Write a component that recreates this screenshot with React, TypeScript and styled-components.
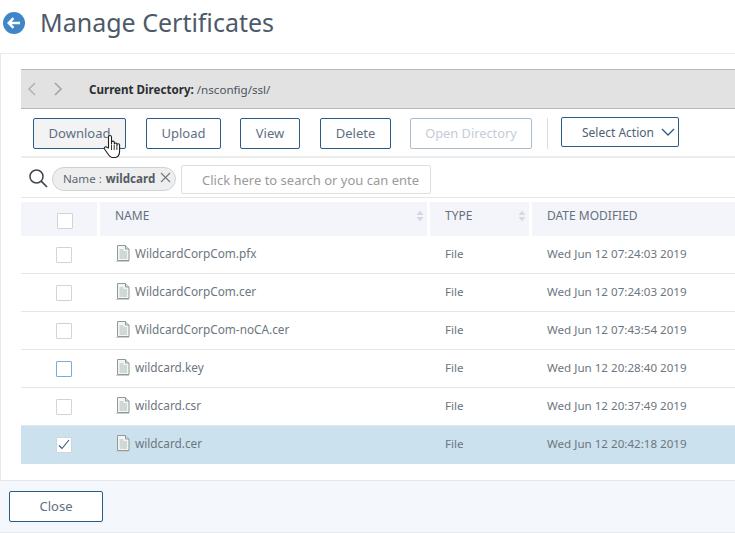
import React from "react";
import styled, { createGlobalStyle } from "styled-components";

const Global = createGlobalStyle`
  html, body { margin: 0; padding: 0; background: #fff; }
  body { font-family: "Noto Sans", "Open Sans", sans-serif; color: #5f6b7a; overflow: hidden; }
  * { box-sizing: border-box; }
`;

const Page = styled.div`
  width: 735px;
  height: 533px;
  display: flex;
  flex-direction: column;
  overflow: hidden;
`;
const TitleBar = styled.header`
  height: 53px;
  display: flex;
  align-items: flex-start;
  padding: 12px 0 0 3px;
  gap: 15px;
`;
const BackIcon = styled.svg`
  width: 22px;
  height: 22px;
  flex: none;
`;
const Title = styled.h1`
  margin: -7px 0 0;
  font-size: 25px;
  line-height: 34px;
  font-weight: 400;
  color: #4d5a69;
`;
const Panel = styled.section`
  height: 427px;
  border-top: 1px solid #e6e9ed;
  border-left: 1px solid #e6e9ed;
  padding: 15px 0 0 20px;
`;
const DirBar = styled.div`
  height: 40px;
  background: #e2e2e2;
  border-top: 1px solid #b9b9b9;
  border-bottom: 1px solid #b9b9b9;
  display: flex;
  align-items: center;
  padding-left: 5px;
`;
const Nav = styled.svg`
  width: 11px;
  height: 16px;
  margin-right: 16px;
  flex: none;
`;
const DirText = styled.div`
  margin-left: 9px;
  font-size: 11.6px;
  color: #4b5560;
  b { font-weight: 700; color: #2b2f33; }
`;
const Toolbar = styled.div`
  height: 49px;
  border-bottom: 2px solid #ececec;
  display: flex;
  align-items: flex-start;
  padding: 9px 0 0 12px;
`;
const Btn = styled.button<{ $w: number; $mr: number; $hover?: boolean; $disabled?: boolean }>`
  width: ${(p) => p.$w}px;
  margin-right: ${(p) => p.$mr}px;
  height: 31px;
  flex: none;
  padding: 0 0 2px;
  font: 400 ${(p) => (p.$disabled ? 12.8 : 13)}px "Noto Sans", sans-serif;
  background: ${(p) => (p.$hover ? "#f3f3f3" : "#fff")};
  color: ${(p) => (p.$disabled ? "#c3ccd7" : "#5f6f82")};
  border: 1px solid ${(p) => (p.$disabled ? "#abbccd" : "#2a5a8a")};
  border-radius: 2px;
`;
const Divider = styled.div`
  width: 1px;
  height: 31px;
  background: #dcdcdc;
  margin-right: 13px;
  flex: none;
`;
const Select = styled.div`
  width: 118px;
  height: 30px;
  margin-top: -1px;
  border: 1px solid #2a5a8a;
  border-radius: 2px;
  display: flex;
  align-items: center;
  padding-left: 20px;
  gap: 7px;
  font-size: 12px;
  color: #4f6075;
`;
const SearchRow = styled.div`
  height: 40px;
  border-bottom: 1px solid #e6e6e6;
  display: flex;
  align-items: center;
  padding: 3px 0 0 7px;
`;
const SearchIcon = styled.svg`
  width: 20px;
  height: 20px;
  margin: -3px 4px 0 0;
  flex: none;
`;
const Chip = styled.div`
  width: 124px;
  height: 24px;
  border: 1px solid #cfd2d5;
  background: #eeeeee;
  border-radius: 12px;
  display: flex;
  align-items: center;
  padding-left: 10px;
  font-size: 11.6px;
  color: #5d6873;
  margin: -1px 5px 0 0;
  flex: none;
  b { font-weight: 700; margin-left: 4px; color: #545c66; }
  i { font-style: normal; margin-left: 5px; display: flex; margin-top: -2px; }
`;
const SearchInput = styled.div`
  width: 250px;
  height: 29px;
  border: 1px solid #dedede;
  border-radius: 2px;
  padding-left: 20px;
  font-size: 13px;
  line-height: 28px;
  color: #9a9a9a;
  overflow: hidden;
  white-space: nowrap;
`;
const Table = styled.div`
  margin-top: 4px;
  display: flex;
  flex-direction: column;
`;
const Cols = "76px 327px 99px 1fr";
const Head = styled.div`
  display: grid;
  grid-template-columns: ${Cols};
  column-gap: 3px;
  height: 34px;
`;
const HeadCell = styled.div`
  background: #f3f5fa;
  display: flex;
  align-items: center;
  padding: 0 2px 7px 15px;
  font-size: 12px;
  color: #65707e;
`;
const CheckHead = styled.div`
  background: #f3f5fa;
  display: flex;
  align-items: center;
  padding-top: 4px;
`;
const SortHead = styled(HeadCell)`
  justify-content: space-between;
`;
const Sort = styled.svg`
  width: 8px;
  height: 12px;
  margin-right: 1px;
`;
const Row = styled.div<{ $selected?: boolean }>`
  display: grid;
  grid-template-columns: ${Cols};
  column-gap: 3px;
  height: 38px;
  align-items: center;
  font-size: 11.6px;
  color: #6c7680;
  background: ${(p) => (p.$selected ? "#cce1ee" : "#fff")};
  border-bottom: 1px solid ${(p) => (p.$selected ? "#cfe0ee" : "#e4e6e8")};
`;
const Check = styled.div<{ $focus?: boolean }>`
  width: 16px;
  height: 16px;
  margin-left: 35px;
  background: #fff;
  border: 1px solid ${(p) => (p.$focus ? "#7fabd5" : "#d4d4d4")};
  border-radius: 1px;
  display: flex;
  align-items: center;
  justify-content: center;
`;
const HeadCheck = styled(Check)`
  margin-left: 36px;
`;
const NameCell = styled.div`
  display: flex;
  align-items: center;
  gap: 4px;
  padding: 0 0 3px 15px;
  font-size: 11.8px;
`;
const FileSvg = styled.svg`
  width: 16px;
  height: 18px;
  flex: none;
`;
const TextCell = styled.div`
  padding: 0 0 2px 15px;
`;
const Footer = styled.footer`
  height: 53px;
  border-top: 1px solid #e2e6ea;
  border-bottom: 1px solid #e6e9ed;
  background: #f4f7fb;
  padding: 10px 0 0 9px;
`;
const CloseBtn = styled(Btn)`
  background: #fff;
`;
const Hand = styled.svg`
  position: absolute;
  left: 103px;
  top: 134px;
  width: 20px;
  height: 25px;
`;
const Root = styled.div`
  position: relative;
`;

const FileIcon = () => (
  <FileSvg viewBox="0 0 16 18">
    <path d="M2.5 1.5h8l3.5 3.5v11.5h-11.5z" fill="#f4f6f5" stroke="#8f9a98" />
    <path d="M10.5 1.5v3.5h3.5" fill="#dfe5e4" stroke="#8f9a98" />
    <path d="M4.5 6h4M4.5 8h7.5M4.5 10h7.5M4.5 12h7.5M4.5 14h7.5" stroke="#a9bdb9" />
    <path d="M1 17.5h13" stroke="#c9cfce" />
  </FileSvg>
);

const SortIcon = () => (
  <Sort viewBox="0 0 8 12">
    <path d="M4 0.5L7.5 5H0.5z M4 11.5L0.5 7H7.5z" fill="#d6dae0" />
  </Sort>
);

const rows = [
  ["WildcardCorpCom.pfx", "Wed Jun 12 07:24:03 2019"],
  ["WildcardCorpCom.cer", "Wed Jun 12 07:24:03 2019"],
  ["WildcardCorpCom-noCA.cer", "Wed Jun 12 07:43:54 2019"],
  ["wildcard.key", "Wed Jun 12 20:28:40 2019"],
  ["wildcard.csr", "Wed Jun 12 20:37:49 2019"],
  ["wildcard.cer", "Wed Jun 12 20:42:18 2019"],
];

export default function App() {
  return (
    <Root>
      <Global />
      <Page>
        <TitleBar>
          <BackIcon viewBox="0 0 22 22">
            <circle cx="11" cy="11" r="11" fill="#3f86c9" />
            <path d="M17 11H6M10.5 6.2L5.7 11l4.8 4.8" fill="none" stroke="#fff" strokeWidth="2.4" />
          </BackIcon>
          <Title>Manage Certificates</Title>
        </TitleBar>
        <Panel>
          <DirBar>
            <Nav viewBox="0 0 11 16">
              <path d="M9 2L3 8l6 6" fill="none" stroke="#b3b3b3" strokeWidth="1.6" />
            </Nav>
            <Nav viewBox="0 0 11 16">
              <path d="M2 2l6 6-6 6" fill="none" stroke="#a5a5a5" strokeWidth="1.6" />
            </Nav>
            <DirText>
              <b>Current Directory:</b> /nsconfig/ssl/
            </DirText>
          </DirBar>
          <Toolbar>
            <Btn $w={93} $mr={20} $hover>Download</Btn>
            <Btn $w={75} $mr={19}>Upload</Btn>
            <Btn $w={60} $mr={20}>View</Btn>
            <Btn $w={71} $mr={19}>Delete</Btn>
            <Btn $w={122} $mr={15} $disabled>Open Directory</Btn>
            <Divider />
            <Select>
              Select Action
              <svg width="14" height="8" viewBox="0 0 14 8">
                <path d="M1 1l6 6 6-6" fill="none" stroke="#2a5a8a" strokeWidth="1.3" />
              </svg>
            </Select>
          </Toolbar>
          <SearchRow>
            <SearchIcon viewBox="0 0 20 20">
              <circle cx="8.5" cy="8.5" r="6.5" fill="none" stroke="#3d4650" strokeWidth="1.5" />
              <path d="M13.2 13.2L19 19" stroke="#3d4650" strokeWidth="1.7" />
            </SearchIcon>
            <Chip>
              Name :<b>wildcard</b>
              <i>
                <svg width="11" height="11" viewBox="0 0 11 11">
                  <path d="M1 1l9 9M10 1l-9 9" stroke="#6f7780" strokeWidth="1.1" />
                </svg>
              </i>
            </Chip>
            <SearchInput>Click here to search or you can ente</SearchInput>
          </SearchRow>
          <Table>
            <Head>
              <CheckHead><HeadCheck /></CheckHead>
              <SortHead>NAME<SortIcon /></SortHead>
              <SortHead>TYPE<SortIcon /></SortHead>
              <HeadCell>DATE MODIFIED</HeadCell>
            </Head>
            {rows.map(([name, date], i) => (
              <Row key={name} $selected={i === 5}>
                <Check $focus={i === 3}>
                  {i === 5 && (
                    <svg width="12" height="11" viewBox="0 0 12 11">
                      <path d="M1 6.5l3 3L11 1" fill="none" stroke="#2a5a8a" strokeWidth="1.1" />
                    </svg>
                  )}
                </Check>
                <NameCell><FileIcon />{name}</NameCell>
                <TextCell>File</TextCell>
                <TextCell>{date}</TextCell>
              </Row>
            ))}
          </Table>
        </Panel>
        <Footer>
          <CloseBtn $w={94} $mr={0}>Close</CloseBtn>
        </Footer>
      </Page>
      <Hand viewBox="0 0 20 25">
        <path
          d="M5.5 14V3a1.5 1.5 0 0 1 3 0v7V8.5a1.4 1.4 0 0 1 2.8 0V10a1.4 1.4 0 0 1 2.7 0v1a1.3 1.3 0 0 1 2.6 0v6c0 3-1.5 6-4 6.5H9c-2 0-3-2-4-3.5L1.5 15c-1-2 1.5-3 2.5-1.5z"
          fill="#fff"
          stroke="#222"
          strokeWidth="1.1"
          strokeLinejoin="round"
        />
        <path d="M8.5 11v5M11.2 11v5M13.9 11v5" stroke="#222" strokeWidth="0.9" />
      </Hand>
    </Root>
  );
}
